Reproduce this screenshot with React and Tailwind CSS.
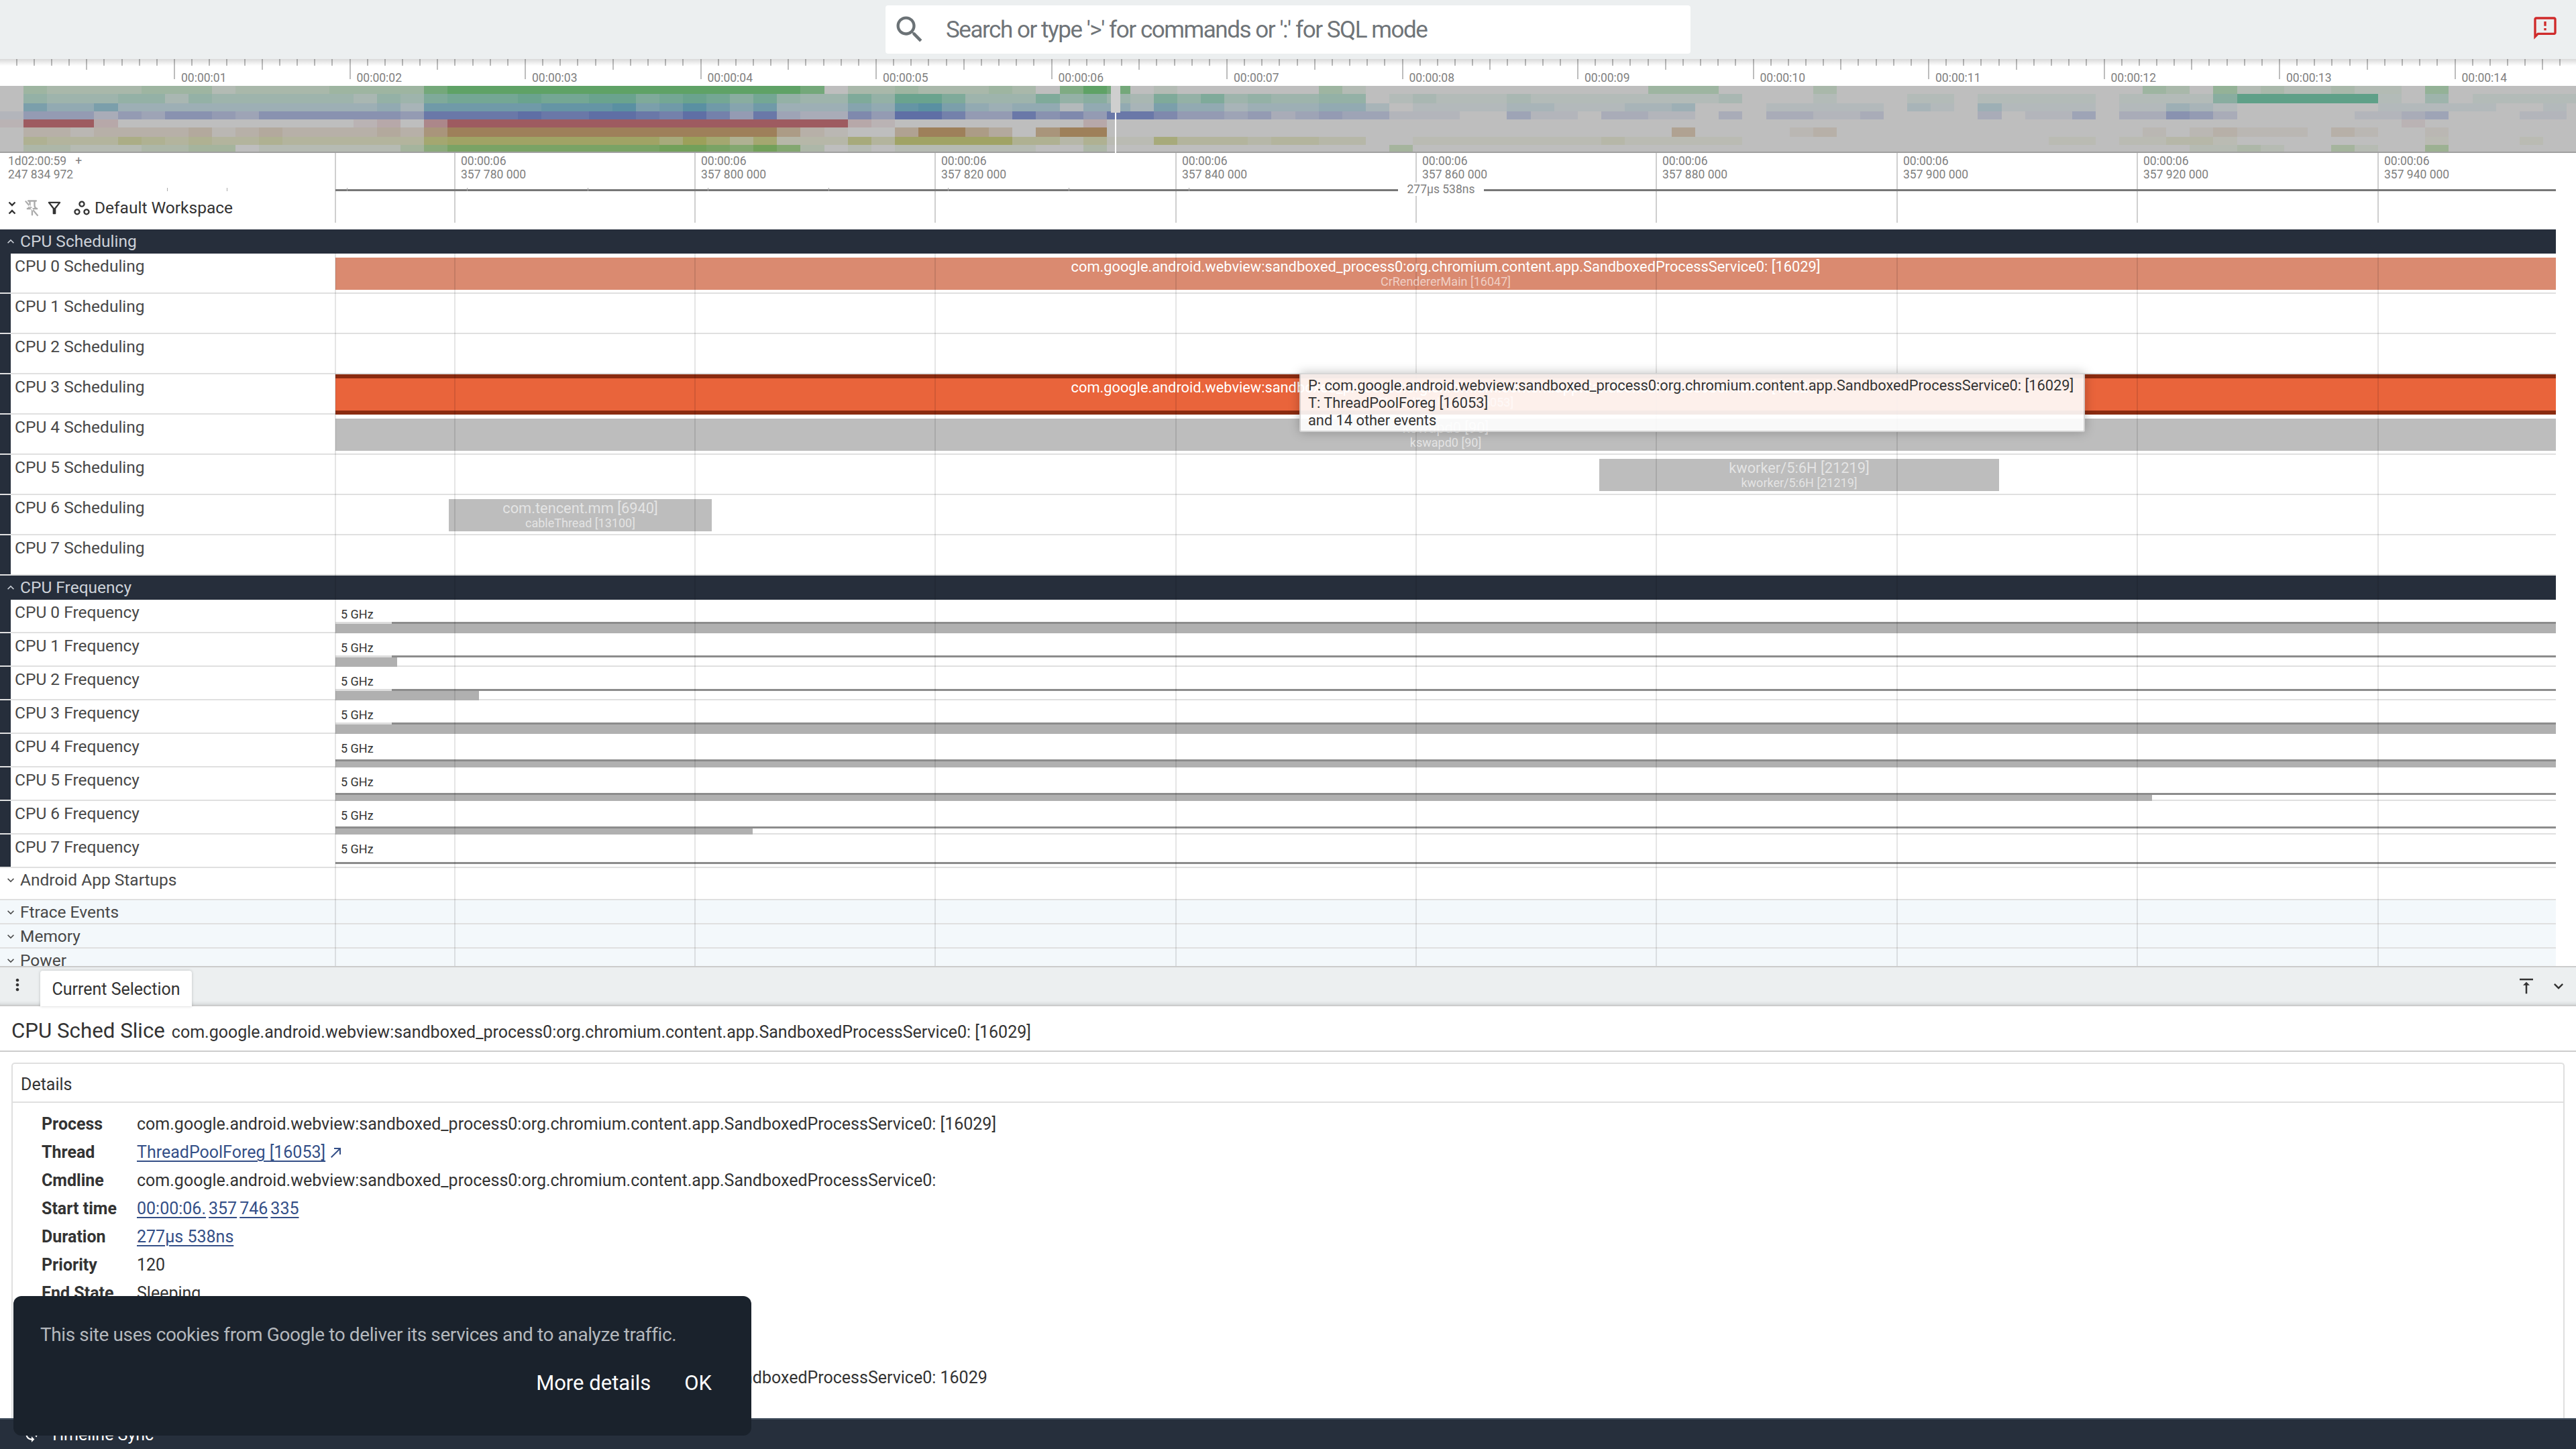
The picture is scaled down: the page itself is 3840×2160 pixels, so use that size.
const ICONS = {
  search: 'M15.5 14h-.79l-.28-.27C15.41 12.59 16 11.11 16 9.5 16 5.91 13.09 3 9.5 3S3 5.91 3 9.5 5.91 16 9.5 16c1.61 0 3.09-.59 4.23-1.57l.27.28v.79l5 4.99L20.49 19l-4.99-5zm-6 0C7.01 14 5 11.99 5 9.5S7.01 5 9.5 5 14 7.01 14 9.5 11.99 14 9.5 14z',
  announcement: 'M20 2H4c-1.1 0-1.99.9-1.99 2L2 22l4-4h14c1.1 0 2-.9 2-2V4c0-1.1-.9-2-2-2zm0 14H5.17L4 17.17V4h16v12zM11 12h2v2h-2zm0-6h2v4h-2z',
  unfoldLess: 'M7.41 18.59L8.83 20 12 16.83 15.17 20l1.41-1.41L12 14l-4.59 4.59zm9.18-13.18L15.17 4 12 7.17 8.83 4 7.41 5.41 12 10l4.59-4.59z',
  pin: 'M14 4v5c0 1.12.37 2.16 1 3H9c.65-.86 1-1.9 1-3V4h4m3-2H7c-.55 0-1 .45-1 1s.45 1 1 1h1v5c0 1.66-1.34 3-3 3v2h5.97v7l1 1 1-1v-7H19v-2c-1.66 0-3-1.34-3-3V4h1c.55 0 1-.45 1-1s-.45-1-1-1z M4 2.5l16 19-1.4 1.2-16-19z',
  filter: 'M7 6h10l-5.01 6.3L7 6zm-2.75-.39C6.27 8.2 10 13 10 13v6c0 .55.45 1 1 1h2c.55 0 1-.45 1-1v-6s3.72-4.8 5.74-7.39c.51-.66.04-1.61-.79-1.61H5.04c-.83 0-1.3.95-.79 1.61z',
  workspaces: 'M6 15c1.1 0 2 .9 2 2s-.9 2-2 2-2-.9-2-2 .9-2 2-2m0-2c-2.2 0-4 1.8-4 4s1.8 4 4 4 4-1.8 4-4-1.8-4-4-4zm6-8c1.1 0 2 .9 2 2s-.9 2-2 2-2-.9-2-2 .9-2 2-2m0-2C9.8 3 8 4.8 8 7s1.8 4 4 4 4-1.8 4-4-1.8-4-4-4zm6 12c1.1 0 2 .9 2 2s-.9 2-2 2-2-.9-2-2 .9-2 2-2m0-2c-2.2 0-4 1.8-4 4s1.8 4 4 4 4-1.8 4-4-1.8-4-4-4z',
  alignTop: 'M8 11h3v10h2V11h3l-4-4-4 4zM4 3v2h16V3H4z',
  expandMore: 'M16.59 8.59L12 13.17 7.41 8.59 6 10l6 6 6-6z',
  expandLess: 'M12 8l-6 6 1.41 1.41L12 10.83l4.59 4.58L18 14z',
  moreVert: 'M12 8c1.1 0 2-.9 2-2s-.9-2-2-2-2 .9-2 2 .9 2 2 2zm0 2c-1.1 0-2 .9-2 2s.9 2 2 2 2-.9 2-2-.9-2-2-2zm0 6c-1.1 0-2 .9-2 2s.9 2 2 2 2-.9 2-2-.9-2-2-2z',
  callMade: 'M9 5v2h6.59L4 18.59 5.41 20 17 8.41V15h2V5z',
  sync: 'M12 4V1L8 5l4 4V6c3.31 0 6 2.69 6 6 0 1.01-.25 1.97-.7 2.8l1.46 1.46C19.54 15.03 20 13.57 20 12c0-4.42-3.58-8-8-8zm0 14c-3.31 0-6-2.69-6-6 0-1.01.25-1.97.7-2.8L5.24 7.74C4.46 8.97 4 10.43 4 12c0 4.42 3.58 8 8 8v3l4-4-4-4v3z',
};

function Icon({ name, className }) {
  return (
    <svg viewBox="0 0 24 24" fill="currentColor" className={className}>
      <path d={ICONS[name]} />
    </svg>
  );
}

const GRID_X = [677, 1035, 1393, 1752, 2110, 2468, 2827, 3185, 3544];
const AXIS_LABELS = ['357 780 000', '357 800 000', '357 820 000', '357 840 000', '357 860 000', '357 880 000', '357 900 000', '357 920 000', '357 940 000'];
const SLICE_NAME = 'com.google.android.webview:sandboxed_process0:org.chromium.content.app.SandboxedProcessService0: [16029]';
const PROCESS_NAME = 'com.google.android.webview:sandboxed_process0:org.chromium.content.app.SandboxedProcessService0:';

// overview heatmap: one digit per 35px cell, 0 = grey, 9 = full colour
const HEAT_ROWS = [
  { y: 128, h: 12, rgb: [95, 162, 102], cells: '0322223331222233337999999999' + '99999970223222320697010000003' + '1000000000000' + '3330' + '00020000000000000' + '3204121121104' + '000000' },
  { y: 140, h: 14, rgb: [95, 160, 136], cells: '0433344243333332436777877886' + '78757433648863336453264634334' + '40121112111111112' + '000100011011111011115999999103011111' },
  { y: 154, h: 12, rgb: [90, 144, 162], cells: '0644633333333333427777788896' + '79757333548964344144264423334' + '42011112211122300' + '011111021031111011321000000111110010' },
  { y: 166, h: 12, rgb: [95, 111, 165], cells: '1444243554355555548888988998' + '79748322649974485648864434234' + '33111003110221102' + '022112000020113022542000001123000110' },
  { y: 178, h: 12, rgb: [158, 91, 96], cells: '1999200000000001205999999999' + '99999999210000000020000000000' + '00000000000000000' + '000000000000000000000000000010000000' },
  { y: 190, h: 14, rgb: [158, 128, 90], cells: '0221222231232222326999999999' + '99999521004995306990000000000' + '00000000000000400' + '001200000000000001012111021001000000' },
  { y: 204, h: 12, rgb: [156, 160, 90], cells: '0433354343343333337888888888' + '69747222638888844241163332332' + '20011111111211111' + '000000000000011011221000000001000100' },
  { y: 216, h: 12, rgb: [114, 160, 90], cells: '0221112233011111136888888888' + '99879720101111110020000000000' + '00300000000000000' + '000000000000000000011210031004000000' },
];

function mix(rgb, level) {
  const t = Number(level) / 9;
  const base = 190;
  return `rgb(${rgb.map((c) => Math.round(base + (c - base) * t)).join(',')})`;
}

function OverviewHeatmap() {
  return (
    <div className="relative h-[100px] w-full overflow-hidden">
      <svg width="3840" height="100" viewBox="0 128 3840 100" shapeRendering="crispEdges" className="block">
        {HEAT_ROWS.map((row) =>
          row.cells.split('').map((level, i) => (
            <rect key={`${row.y}-${i}`} x={i * 35.1} y={row.y} width="36" height={row.h} fill={mix(row.rgb, level)} />
          ))
        )}
        <rect x="0" y="226" width="3840" height="2" fill="#a0a0a0" />
      </svg>
      {/* viewport marker */}
      <div className="absolute left-[1656px] top-0 h-[40px] w-[14px] bg-[#cfcfcf]" />
      <div className="absolute left-[1662px] top-[40px] h-[60px] w-[2px] bg-white" />
    </div>
  );
}

function TopBar() {
  return (
    <div className="relative flex h-[88px] items-center justify-center bg-[#eceff0]">
      <div className="flex h-[72px] w-[1200px] items-center rounded-[4px] bg-white pl-[10px]">
        <Icon name="search" className="h-[52px] w-[52px] text-[#6b7276]" />
        <span className="ml-[28px] mt-[2px] text-[35px] tracking-[-1.46px] text-[#6f7478]">Search or type '&gt;' for commands or ':' for SQL mode</span>
      </div>
      <Icon name="announcement" className="absolute right-[26px] top-[22px] h-[40px] w-[40px] text-[#cf2a2a]" />
    </div>
  );
}

function OverviewRuler() {
  const majors = Array.from({ length: 15 }, (_, i) => -2.5 + i * 261.5);
  const minors = Array.from({ length: 148 }, (_, i) => -2.5 + i * 26.15);
  return (
    <div className="relative h-[40px] bg-white">
      <svg width="3840" height="40" className="absolute left-0 top-0 block" shapeRendering="crispEdges">
        {minors.map((x, i) => (
          <rect key={i} x={x} y="0" width="2" height={i % 10 === 0 ? 30 : i % 5 === 0 ? 16 : 10} fill="#bdbdbd" />
        ))}
      </svg>
      <div className="absolute left-0 right-0 top-0 h-[10px] bg-gradient-to-b from-black/15 to-transparent" />
      {majors.slice(1).map((x, i) => (
        <span key={x} className="absolute top-[16px] text-[17.5px] leading-[24px] text-[#808080]" style={{ left: x + 11 }}>
          {`00:00:${String(i + 1).padStart(2, '0')}`}
        </span>
      ))}
    </div>
  );
}

function AxisHeader() {
  const smallTicks = [249, 338, 517, 696, 876, 1055, 1235, 1413, 1593, 1772];
  return (
    <div className="relative h-[114px] w-[3810px] bg-white">
      {[499, ...GRID_X].map((x) => (
        <div key={x} className="absolute top-0 h-[104px] w-[2px] bg-[#cfcfcf]" style={{ left: x }} />
      ))}
      <div className="absolute left-[12px] top-[2px] text-[17.5px] leading-[20px] text-[#808080]">
        <div className="whitespace-pre">1d02:00:59{'   '}+</div>
        <div>247 834 972</div>
      </div>
      {GRID_X.map((x, i) => (
        <div key={x} className="absolute top-[2px] text-[17.5px] leading-[20px] text-[#808080]" style={{ left: x + 10 }}>
          <div>00:00:06</div>
          <div>{AXIS_LABELS[i]}</div>
        </div>
      ))}
      <div className="absolute left-[500px] right-0 top-[54px] h-[3px] bg-[#777777]" />
      {smallTicks.map((x) => (
        <div key={x} className="absolute top-[52px] h-[5px] w-[1px] bg-[#aaaaaa]" style={{ left: x }} />
      ))}
      <div className="absolute left-[2084px] top-[44px] w-[128px] bg-white text-center text-[17.5px] leading-[20px] text-[#808080]">277µs 538ns</div>
      <div className="absolute left-[4px] top-[63px] flex h-[38px] items-center text-[#333333]">
        <Icon name="unfoldLess" className="h-[28px] w-[28px]" />
        <Icon name="pin" className="ml-[2px] h-[28px] w-[28px] text-[#aaaaaa]" />
        <Icon name="filter" className="ml-[5px] h-[28px] w-[28px]" />
        <Icon name="workspaces" className="ml-[13px] h-[28px] w-[28px]" />
        <span className="ml-[5px] text-[24.5px]">Default Workspace</span>
      </div>
    </div>
  );
}

function Slice({ left, width, top, height, color, title, sub, titleClass, subClass }) {
  return (
    <div className={`absolute flex flex-col items-center overflow-hidden pt-[2px] ${color}`} style={{ left, width, top, height }}>
      <div className={`text-[21.8px] leading-[24px] ${titleClass}`}>{title}</div>
      <div className={`text-[18px] leading-[20px] ${subClass}`}>{sub}</div>
    </div>
  );
}

function SectionHeader({ title }) {
  return (
    <div className="flex h-[36px] items-center bg-[#262e3b] pl-[6px] text-[#cdd2d9]">
      <Icon name="expandLess" className="h-[20px] w-[20px]" />
      <span className="ml-[4px] text-[24.5px] leading-[30px]">{title}</span>
    </div>
  );
}

function TrackRow({ label, height, children }) {
  return (
    <div className="flex border-b-2 border-[#e0e0e0] bg-white" style={{ height }}>
      <div className="w-[16px] bg-[#262e3b]" />
      <div className="w-[484px] pl-[6px] pt-[5px] text-[24.5px] leading-[28px] text-[#484848]">{label}</div>
      <div className="relative flex-1">{children}</div>
    </div>
  );
}

function FreqRow({ index, lineTop, fillEnd, fade, lineEnd }) {
  return (
    <TrackRow label={`CPU ${index} Frequency`} height={50}>
      <span className="absolute left-[8px] top-[12px] text-[18px] leading-[20px] text-[#333333]">5 GHz</span>
      {fade && <div className="absolute left-0 h-[3px] w-[84px] bg-[#dddddd]" style={{ top: lineTop }} />}
      <div className="absolute right-0 h-[3px] bg-[#8c8c8c]" style={{ top: lineTop, left: fade ? 84 : 0 }} />
      {fillEnd > 0 && <div className="absolute bottom-[-2px] left-0 bg-[#b0b0b0]" style={{ top: lineTop + 3, width: fillEnd }} />}
      {lineEnd && <div className="absolute h-[3px] bg-[#aaaaaa]" style={{ top: lineTop, left: lineEnd, right: 0 }} />}
    </TrackRow>
  );
}

function GroupRow({ title, height, tint }) {
  return (
    <div className={`flex overflow-hidden border-b-2 border-[#e0e0e0] ${tint}`} style={{ height }}>
      <div className="flex h-[36px] w-[500px] items-center pl-[6px] text-[#484848]">
        <Icon name="expandMore" className="h-[20px] w-[20px]" />
        <span className="ml-[4px] text-[24.5px] leading-[30px]">{title}</span>
      </div>
    </div>
  );
}

function Tracks() {
  const cpuTitle = 'text-white';
  return (
    <div className="relative h-[1098px] w-[3810px] overflow-hidden">
      <SectionHeader title="CPU Scheduling" />
      <TrackRow label="CPU 0 Scheduling" height={60}>
        <Slice left={0} width={3310} top={6} height={48} color="bg-[#da8a70]" title={SLICE_NAME} sub="CrRendererMain [16047]" titleClass={cpuTitle} subClass="text-white/60" />
      </TrackRow>
      <TrackRow label="CPU 1 Scheduling" height={60} />
      <TrackRow label="CPU 2 Scheduling" height={60} />
      <TrackRow label="CPU 3 Scheduling" height={60}>
        <div className="absolute left-0 top-0 h-[60px] w-[3310px] border-y-[6px] border-[#8a2b10] bg-[#e9643b] pt-[2px]">
          <div className="flex flex-col items-center">
            <div className="text-[21.8px] leading-[24px] text-white">{SLICE_NAME}</div>
            <div className="text-[18px] leading-[20px] text-white/60">ThreadPoolForeg [16053]</div>
          </div>
        </div>
      </TrackRow>
      <TrackRow label="CPU 4 Scheduling" height={60}>
        <Slice left={0} width={3310} top={6} height={48} color="bg-[#bdbdbd]" title="kswapd0 [90]" sub="kswapd0 [90]" titleClass="text-white/60" subClass="text-white/60" />
      </TrackRow>
      <TrackRow label="CPU 5 Scheduling" height={60}>
        <Slice left={1884} width={596} top={6} height={48} color="bg-[#bdbdbd]" title="kworker/5:6H [21219]" sub="kworker/5:6H [21219]" titleClass="text-white/60" subClass="text-white/60" />
      </TrackRow>
      <TrackRow label="CPU 6 Scheduling" height={60}>
        <Slice left={169} width={392} top={6} height={48} color="bg-[#bdbdbd]" title="com.tencent.mm [6940]" sub="cableThread [13100]" titleClass="text-white/60" subClass="text-white/60" />
      </TrackRow>
      <TrackRow label="CPU 7 Scheduling" height={60} />
      <SectionHeader title="CPU Frequency" />
      <FreqRow index={0} lineTop={33} fillEnd={3310} fade />
      <FreqRow index={1} lineTop={33} fillEnd={92} fade />
      <FreqRow index={2} lineTop={33} fillEnd={214} fade />
      <FreqRow index={3} lineTop={33} fillEnd={3310} fade />
      <FreqRow index={4} lineTop={38} fillEnd={3310} />
      <FreqRow index={5} lineTop={38} fillEnd={2708} />
      <FreqRow index={6} lineTop={38} fillEnd={622} />
      <FreqRow index={7} lineTop={41} fillEnd={0} />
      <GroupRow title="Android App Startups" height={48} tint="bg-white" />
      <GroupRow title="Ftrace Events" height={36} tint="bg-[#f3f8fb]" />
      <GroupRow title="Memory" height={36} tint="bg-[#f3f8fb]" />
      <GroupRow title="Power" height={36} tint="bg-[#f3f8fb]" />
      {/* time gridlines run over every track and slice */}
      {[499, ...GRID_X].map((x) => (
        <div key={x} className="absolute bottom-0 top-[36px] w-[2px] bg-black/[0.1]" style={{ left: x }} />
      ))}
      <div className="absolute left-[1937px] top-[214px] h-[88px] w-[1171px] whitespace-nowrap rounded-[3px] border-2 border-black/15 bg-white/90 pl-[11px] pt-[4px] text-[21.8px] leading-[26px] text-[#333333] shadow-[0_0_16px_rgba(0,0,0,0.25)]">
        <div>P: {SLICE_NAME}</div>
        <div>T: ThreadPoolForeg [16053]</div>
        <div>and 14 other events</div>
      </div>
    </div>
  );
}

const TIME_LINK = ['00:00:06.', '357', '746', '335'];

const DETAILS = [
  { label: 'Process', value: `${PROCESS_NAME} [16029]` },
  { label: 'Thread', value: 'ThreadPoolForeg [16053]', link: true, arrow: true },
  { label: 'Cmdline', value: PROCESS_NAME },
  { label: 'Start time', parts: TIME_LINK },
  { label: 'Duration', value: '277µs 538ns', link: true },
  { label: 'Priority', value: '120' },
  { label: 'End State', value: 'Sleeping' },
  { label: '', value: '' },
  { label: '', value: '' },
  { label: '', value: `${PROCESS_NAME} 16029` },
];

function DetailValue({ row }) {
  if (row.parts) {
    return (
      <span className="flex gap-[4px] text-[#344f87]">
        {row.parts.map((part) => (
          <span key={part} className="underline decoration-2 underline-offset-4">{part}</span>
        ))}
      </span>
    );
  }
  if (row.link) {
    return <span className="text-[#344f87] underline decoration-2 underline-offset-4">{row.value}</span>;
  }
  return <span>{row.value}</span>;
}

function DetailsPanel() {
  return (
    <div className="flex h-[674px] flex-col overflow-hidden bg-white">
      <div className="relative flex h-[60px] border-y-2 border-[#cccccc] bg-[#eceff0] shadow-[inset_0_-6px_6px_-6px_rgba(0,0,0,0.2)]">
        <Icon name="moreVert" className="ml-[12px] mt-[12px] h-[28px] w-[28px] text-[#333333]" />
        <div className="ml-[20px] mt-[5px] flex h-[53px] w-[226px] items-center justify-center rounded-t-[4px] bg-white pt-[2px] text-[25px] text-[#333333] shadow-[0_0_4px_rgba(0,0,0,0.2)]">Current Selection</div>
        <Icon name="alignTop" className="absolute right-[59px] top-[13px] h-[30px] w-[30px] text-[#333333]" />
        <Icon name="expandMore" className="absolute right-[12px] top-[14px] h-[28px] w-[28px] text-[#333333]" />
      </div>
      <div className="flex h-[68px] items-center border-b-2 border-[#cccccc] pl-[17px] pt-[8px] text-[#333333]">
        <span className="text-[31.25px]">CPU Sched Slice</span>
        <span className="ml-[10px] mt-[3px] text-[25px]">{SLICE_NAME}</span>
      </div>
      <div className="mx-[17px] mt-[16px] flex-1 rounded-t-[5px] border-2 border-b-0 border-[#e0e0e0]">
        <div className="flex h-[58px] items-center border-b-2 border-[#e0e0e0] pl-[12px] pt-[5px] text-[25px] text-[#333333]">Details</div>
        <div className="px-[43px] pt-[11px]">
          {DETAILS.map((row, i) => (
            <div key={i} className="flex h-[42px] items-center text-[25px] text-[#333333]">
              <span className="w-[142px] font-bold">{row.label}</span>
              <DetailValue row={row} />
              {row.arrow && <Icon name="callMade" className="ml-[4px] h-[24px] w-[24px] text-[#344f87]" />}
            </div>
          ))}
        </div>
      </div>
    </div>
  );
}

function Footer() {
  return (
    <div className="flex h-[46px] items-center border-t-2 border-[#465362] bg-[#262f3c] pl-[34px] text-white">
      <Icon name="sync" className="h-[26px] w-[26px]" />
      <span className="ml-[14px] mt-[2px] text-[25px]">Timeline Sync</span>
    </div>
  );
}

export default function App() {
  return (
    <div className="relative flex h-[2160px] w-[3840px] flex-col overflow-hidden bg-white font-['Roboto',sans-serif]">
      <TopBar />
      <OverviewRuler />
      <OverviewHeatmap />
      <AxisHeader />
      <Tracks />
      <DetailsPanel />
      <Footer />
      <div className="absolute left-[20px] top-[1932px] flex h-[208px] w-[1100px] flex-col rounded-[12px] bg-[#1a222c] px-[40px]">
        <div className="mt-[38px] text-[28px] leading-[40px] tracking-[-0.4px] text-[#b4b8bd]">This site uses cookies from Google to deliver its services and to analyze traffic.</div>
        <div className="mt-[32px] flex justify-end pr-[19px] text-[31px] leading-[40px] text-white">
          <span>More details</span>
          <span className="ml-[50px]">OK</span>
        </div>
      </div>
    </div>
  );
}
